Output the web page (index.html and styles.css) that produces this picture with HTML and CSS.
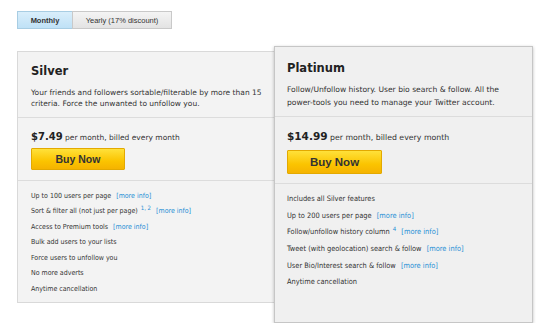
FILE: index.html
```html
<!DOCTYPE html>
<html lang="en">
<head>
  <meta charset="UTF-8" />
  <meta name="viewport" content="width=device-width, initial-scale=1" />
  <title>Pricing</title>
  <link rel="stylesheet" href="styles.css">
</head>
<body>

  <div class="page">
    <div class="tabs">
      <button class="tab active">Monthly</button>
      <button class="tab">Yearly (17% discount)</button>
    </div>

    <div class="plans">
      <!-- Silver -->
      <div class="plan silver">
        <div class="plan-head">
          <h2>Silver</h2>
          <p>Your friends and followers sortable/filterable by more than 15 criteria. Force the unwanted to unfollow you.</p>
        </div>
        <div class="plan-price">
          <div class="price"><strong>$7.49</strong> per month, billed every month</div>
          <button class="buy">Buy Now</button>
        </div>
        <ul class="features">
          <li>Up to 100 users per page <a href="#">[more info]</a></li>
          <li>Sort &amp; filter all (not just per page) <sup>1, 2</sup> <a href="#">[more info]</a></li>
          <li>Access to Premium tools <a href="#">[more info]</a></li>
          <li>Bulk add users to your lists</li>
          <li>Force users to unfollow you</li>
          <li>No more adverts</li>
          <li>Anytime cancellation</li>
        </ul>
      </div>

      <!-- Platinum -->
      <div class="plan platinum">
        <div class="plan-head">
          <h2>Platinum</h2>
          <p>Follow/Unfollow history. User bio search &amp; follow. All the power-tools you need to manage your Twitter account.</p>
        </div>
        <div class="plan-price">
          <div class="price"><strong>$14.99</strong> per month, billed every month</div>
          <button class="buy">Buy Now</button>
        </div>
        <ul class="features">
          <li>Includes all Silver features</li>
          <li>Up to 200 users per page <a href="#">[more info]</a></li>
          <li>Follow/unfollow history column <sup>4</sup> <a href="#">[more info]</a></li>
          <li>Tweet (with geolocation) search &amp; follow <a href="#">[more info]</a></li>
          <li>User Bio/Interest search &amp; follow <a href="#">[more info]</a></li>
          <li>Anytime cancellation</li>
        </ul>
      </div>
    </div>
  </div>

</body>
</html>
```

FILE: styles.css
```css
body {
  margin: 0;
  background: #fff;
  color: #333;
  font-family: 'DejaVu Sans', Verdana, sans-serif;
}

.page {
  padding: 11px 17px 0;
}

/* Tabs */
.tabs {
  display: flex;
}

.tab {
  height: 18px;
  padding: 0;
  border: 1px solid #c9c9c9;
  background: linear-gradient(#f4f4f4, #e3e3e3);
  font-family: 'Liberation Sans', Arial, sans-serif;
  font-size: 7.5px;
  color: #333;
  cursor: pointer;
  width: 100px;
}

.tab.active {
  width: 55px;
  border-color: #a8cde3;
  background: linear-gradient(#d9eefb, #bfe1f6);
  font-weight: bold;
  border-right: none;
}

/* Plans */
.plans {
  display: flex;
  align-items: flex-start;
  margin-top: 17px;
}

.plan {
  box-sizing: border-box;
  background: #f3f3f3;
  border: 1px solid #d9d9d9;
}

.plan h2 {
  margin: 0;
  font-size: 11.5px;
  line-height: 16px;
  font-weight: bold;
  color: #222;
}

.plan p {
  margin: 0;
}

.plan-head,
.plan-price {
  border-bottom: 1px solid #dcdcdc;
}

.price strong {
  font-size: 10px;
  color: #222;
}

.buy {
  display: block;
  border: 1px solid #e3a900;
  border-radius: 1px;
  background: linear-gradient(#ffe13a, #fbc400 60%, #f5b300);
  font-family: 'Liberation Sans', Arial, sans-serif;
  font-weight: bold;
  color: #333;
  padding: 0;
  cursor: pointer;
}

.features {
  list-style: none;
  margin: 0;
  font-stretch: condensed;
}

.features a,
.features sup {
  color: #1f8fd5;
  text-decoration: none;
}

.features a {
  margin-left: 3px;
}

.features sup {
  font-size: 6px;
  line-height: 0;
  margin-left: 1px;
}

/* Silver */
.silver {
  width: 260px;
  margin-top: 5px;
}

.silver .plan-head {
  padding: 11px 13px 8px;
  font-size: 7.5px;
  line-height: 11px;
}

.silver h2 {
  margin-bottom: 8px;
}

.silver .plan-price {
  padding: 12px 13px 10px;
  font-size: 7.5px;
  line-height: 14px;
}

.silver .buy {
  margin-top: 3px;
  width: 94px;
  height: 22px;
  font-size: 10.5px;
}

.silver .features {
  padding: 7.5px 13px 4.5px;
  font-size: 7px;
  line-height: 15.5px;
}

/* Platinum lies over the Silver card */
.platinum {
  position: relative;
  width: 259px;
  margin-left: -3px;
  background: #f0f0f0;
  border-color: #c6c6c6;
  box-shadow: 0 1px 3px rgba(0, 0, 0, 0.25);
}

.platinum .plan-head {
  padding: 13px 12px 7.5px;
  font-size: 7.6px;
  line-height: 13px;
}

.platinum h2 {
  margin-bottom: 6.5px;
}

.platinum .plan-price {
  padding: 11.5px 12px 9px;
  font-size: 7.8px;
  line-height: 14px;
}

.platinum .price strong {
  font-size: 10.5px;
}

.platinum .buy {
  margin-top: 5px;
  width: 95px;
  height: 24px;
  font-size: 11.5px;
}

.platinum .features {
  padding: 7.7px 12px 31px;
  font-size: 7.4px;
  line-height: 16.6px;
}
```
